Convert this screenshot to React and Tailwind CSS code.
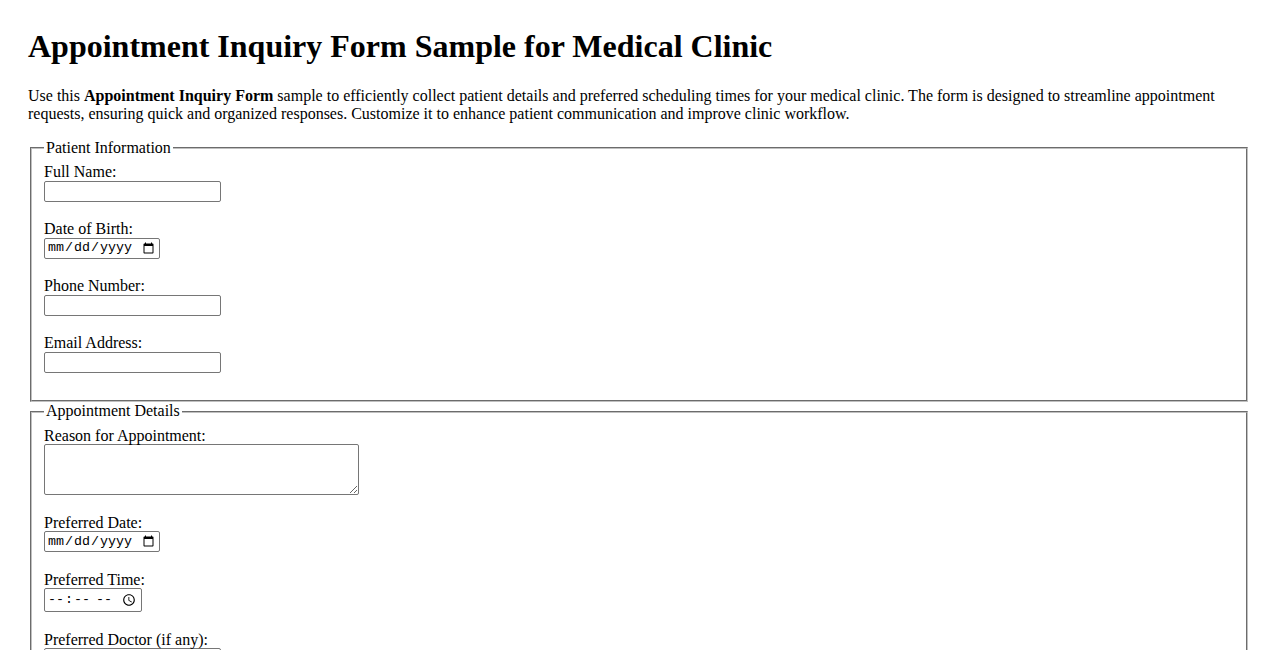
import React from 'react';

const serif = "font-['Liberation_Serif','Times_New_Roman',serif]";
const controlFont = "font-['Liberation_Mono','DejaVu_Sans_Mono',monospace] text-[13.333px]";
const controlBox = 'block border border-[#767676] rounded-[2px] bg-white px-[2px] py-[1px] text-black';

// One label + control pair, spaced like label<br>input<br><br>
const Field = ({ label, children }) => (
  <div className="pb-[18.6px]">
    <label className="block leading-[18.4px]">{label}</label>
    <div className="-mt-px">{children}</div>
  </div>
);

const TextInput = () => (
  <input type="text" className={`${controlBox} ${controlFont} w-[177px] h-[21px]`} />
);

const DateInput = () => (
  <input type="date" className={`${controlBox} ${controlFont} w-[116px] h-[21px]`} />
);

const Section = ({ title, children }) => (
  <fieldset className="mx-[2px] border-2 [border-style:groove] border-[#c0c0c0] px-[12px] pt-[6px] pb-[9px]">
    <legend className="px-[2px] leading-[18.4px]">{title}</legend>
    {children}
  </fieldset>
);

export default function App() {
  return (
    <div className={`${serif} text-[16px] text-black bg-white min-h-screen px-[28px] pt-[28px] pb-[28px]`}>
      <h1 className="text-[32px] font-bold leading-[37px] mb-[21.5px]">
        Appointment Inquiry Form Sample for Medical Clinic
      </h1>
      <p className="leading-[18.2px] mb-[16px]">
        Use this <strong className="font-bold">Appointment Inquiry Form</strong> sample to efficiently collect patient
        details and preferred scheduling times for your medical clinic. The form is designed to streamline appointment
        requests, ensuring quick and organized responses. Customize it to enhance patient communication and improve
        clinic workflow.
      </p>

      <form>
        <Section title="Patient Information">
          <Field label="Full Name:">
            <TextInput />
          </Field>
          <Field label="Date of Birth:">
            <DateInput />
          </Field>
          <Field label="Phone Number:">
            <TextInput />
          </Field>
          <Field label="Email Address:">
            <TextInput />
          </Field>
        </Section>

        <Section title="Appointment Details">
          <Field label="Reason for Appointment:">
            <textarea className={`${controlBox} ${controlFont} w-[315px] h-[51px]`} />
          </Field>
          <Field label="Preferred Date:">
            <DateInput />
          </Field>
          <Field label="Preferred Time:">
            <input type="time" className={`${controlBox} ${controlFont} w-[98px] h-[24px]`} />
          </Field>
          <Field label="Preferred Doctor (if any):">
            <TextInput />
          </Field>
        </Section>

        <Section title="Additional Information">
          <Field label="Insurance Provider:">
            <TextInput />
          </Field>
          <Field label="Additional Comments:">
            <textarea className={`${controlBox} ${controlFont} w-[315px] h-[51px]`} />
          </Field>
        </Section>

        <button type="submit" className="mt-[10px] border border-[#767676] rounded-[2px] bg-[#efefef] px-[6px] py-[1px] text-[13.333px]">
          Submit Inquiry
        </button>
      </form>
    </div>
  );
}
